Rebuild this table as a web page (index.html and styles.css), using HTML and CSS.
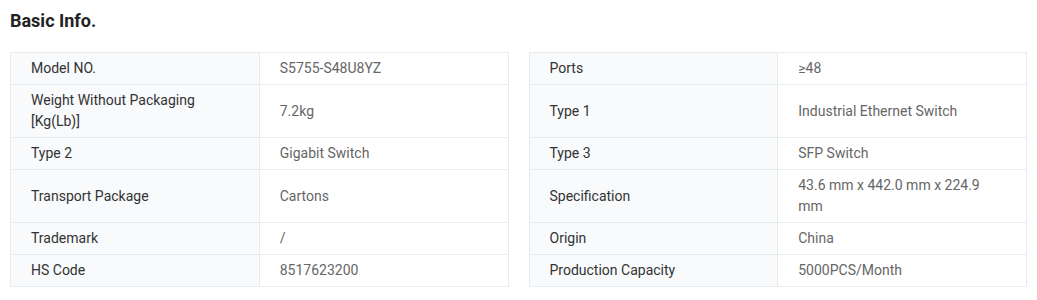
FILE: index.html
```html
<!DOCTYPE html>
<html>
<head>
<meta charset="utf-8">
<link rel="stylesheet" href="styles.css">
</head>
<body>
<div class="page">
  <h2 class="title">Basic Info.</h2>
  <div class="grid">
    <table class="spec">
      <colgroup><col class="c-label"><col class="c-value"></colgroup>
      <tr><th>Model NO.</th><td>S5755-S48U8YZ</td></tr>
      <tr><th>Weight Without Packaging [Kg(Lb)]</th><td>7.2kg</td></tr>
      <tr><th>Type 2</th><td>Gigabit Switch</td></tr>
      <tr class="tall"><th>Transport Package</th><td>Cartons</td></tr>
      <tr><th>Trademark</th><td>/</td></tr>
      <tr><th>HS Code</th><td>8517623200</td></tr>
    </table>
    <table class="spec">
      <colgroup><col class="c-label"><col class="c-value"></colgroup>
      <tr><th>Ports</th><td>&ge;48</td></tr>
      <tr class="tall"><th>Type 1</th><td>Industrial Ethernet Switch</td></tr>
      <tr><th>Type 3</th><td>SFP Switch</td></tr>
      <tr><th>Specification</th><td>43.6 mm x 442.0 mm x 224.9 mm</td></tr>
      <tr><th>Origin</th><td>China</td></tr>
      <tr><th>Production Capacity</th><td>5000PCS/Month</td></tr>
    </table>
  </div>
</div>
</body>
</html>
```
FILE: styles.css
```css
html, body {
  margin: 0;
  padding: 0;
  background: #ffffff;
}
.page {
  padding: 9px 10px 0 10px;
  font-family: Roboto, "Liberation Sans", Arial, sans-serif;
}
.title {
  margin: 0 0 19px 0;
  font-size: 18px;
  line-height: 24px;
  font-weight: 700;
  color: #222222;
}
.grid {
  display: grid;
  grid-template-columns: 1fr 1fr;
  column-gap: 20px;
}
.spec {
  width: 100%;
  border-collapse: collapse;
  table-layout: fixed;
  font-size: 14px;
  line-height: 21px;
}
.c-label, .c-value {
  width: 50%;
}
.spec th, .spec td {
  border: 1px solid #e9ecef;
  padding: 5px 20px;
  text-align: left;
  vertical-align: middle;
  font-weight: 400;
}
.spec th {
  background: #f8fafc;
  color: #333333;
}
.spec td {
  color: #666666;
  background: #ffffff;
}
.spec tr.tall th, .spec tr.tall td {
  height: 42px;
}
```
